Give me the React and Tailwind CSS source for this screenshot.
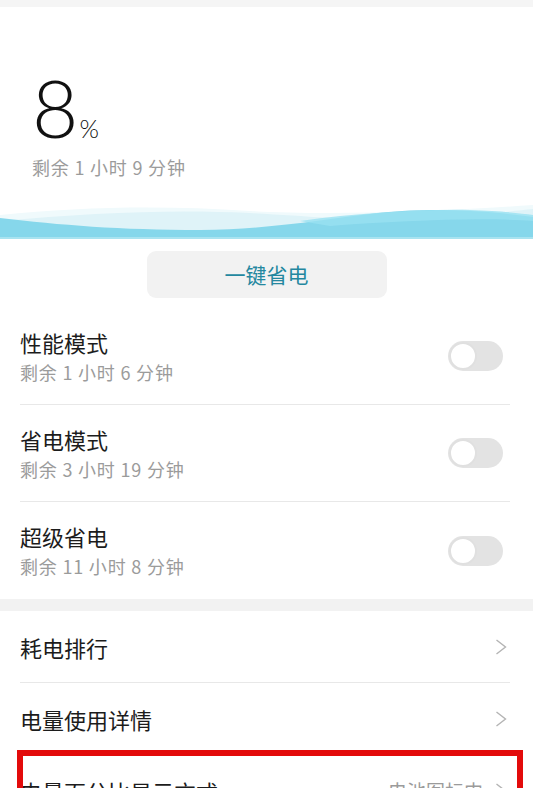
import React from "react";

const cjk = { fontFamily: '"Noto Sans CJK SC", "Noto Sans", sans-serif' };

function Toggle() {
  return (
    <div className="relative h-[30px] w-[55px] rounded-full bg-[#e3e3e3]">
      <div className="absolute left-[1px] top-[1px] h-[28px] w-[28px] rounded-full border-[2px] border-[#e0e0e0] bg-white" />
    </div>
  );
}

function Chevron() {
  return (
    <svg width="12" height="16" viewBox="0 0 12 16" fill="none">
      <path d="M1.5 1 L10.5 8 L1.5 15" stroke="#b4b4b4" strokeWidth="1.4" strokeLinejoin="miter" />
    </svg>
  );
}

function ToggleRow({ title, sub, last }) {
  return (
    <div className={`ml-5 mr-[23px] flex h-[97px] items-center justify-between ${last ? "" : "border-b border-[#e8e8e8]"}`}>
      <div className="flex flex-col">
        <span className="text-[22px] leading-[26px] text-[#1c1c1c]">{title}</span>
        <span className="mt-[5px] text-[18px] leading-[24px] tracking-[0.8px] text-[#9b9b9b]">{sub}</span>
      </div>
      <div className="mr-[7px]">
        <Toggle />
      </div>
    </div>
  );
}

function LinkRow({ title, value, last }) {
  return (
    <div className={`ml-5 mr-[23px] flex h-[72px] items-center justify-between ${last ? "" : "border-b border-[#e8e8e8]"}`}>
      <span className="text-[22px] leading-[26px] text-[#1c1c1c]">{title}</span>
      <div className="mr-[3px] flex items-center gap-3">
        {value && <span className="text-[19px] text-[#9b9b9b]">{value}</span>}
        <Chevron />
      </div>
    </div>
  );
}

function Wave() {
  return (
    <svg width="533" height="40" viewBox="0 0 533 40" preserveAspectRatio="none" className="block">
      <path d="M0 16 C 80 8, 160 6, 250 12 C 320 16, 420 14, 533 6 L533 40 L0 40 Z" fill="#f0fafc" />
      <path d="M0 22 C 90 14, 170 10, 250 14 C 320 18, 360 22, 420 20 C 470 18, 510 12, 533 10 L533 40 L0 40 Z" fill="#dff3f8" />
      <path d="M0 19 C 60 26, 120 31, 200 31 C 300 30, 360 11, 430 11 C 480 11, 510 15, 533 18 L533 40 L0 40 Z" fill="#86d7eb" />
      <path d="M300 22 C 360 14, 420 10, 470 11 C 500 12, 520 14, 533 16 L533 22 C 480 18, 400 22, 330 27 Z" fill="#98e1f1" opacity="0.8" />
      <rect x="0" y="38" width="533" height="2" fill="#a9e3f0" />
    </svg>
  );
}

export default function App() {
  return (
    <div className="relative h-[788px] w-[533px] overflow-hidden bg-white" style={cjk}>
      <div className="h-[7px] bg-[#f5f5f5]" />
      <div className="flex flex-col px-8 pt-[60px]">
        <div className="flex items-end">
          <span
            className="text-[80px] leading-[80px] font-light text-[#111]"
            style={{ fontFamily: 'Lato, "Open Sans", sans-serif' }}
          >
            8
          </span>
          <span
            className="mb-[6px] ml-[1px] text-[25px] leading-[25px] font-light text-[#111]"
            style={{ fontFamily: 'Lato, "Open Sans", sans-serif' }}
          >
            %
          </span>
        </div>
        <span className="mt-[8px] text-[18px] leading-[24px] tracking-[0.8px] text-[#9b9b9b]">剩余 1 小时 9 分钟</span>
      </div>
      <div className="mt-[20px]">
        <Wave />
      </div>
      <div className="mt-[12px] flex justify-center">
        <div className="flex h-[47px] w-[240px] items-center justify-center rounded-[9px] bg-[#f2f2f2]">
          <span className="text-[21px] text-[#24879f]">一键省电</span>
        </div>
      </div>
      <div className="mt-[10px]">
        <ToggleRow title="性能模式" sub="剩余 1 小时 6 分钟" />
        <ToggleRow title="省电模式" sub="剩余 3 小时 19 分钟" />
        <ToggleRow title="超级省电" sub="剩余 11 小时 8 分钟" last />
      </div>
      <div className="h-[12px] bg-[#f2f2f2]" />
      <LinkRow title="耗电排行" />
      <LinkRow title="电量使用详情" />
      <LinkRow title="电量百分比显示方式" value="电池图标内" last />
      <div className="absolute left-[17px] top-[750px] h-[80px] w-[506px] border-[6px] border-[#e30b0b]" />
    </div>
  );
}
